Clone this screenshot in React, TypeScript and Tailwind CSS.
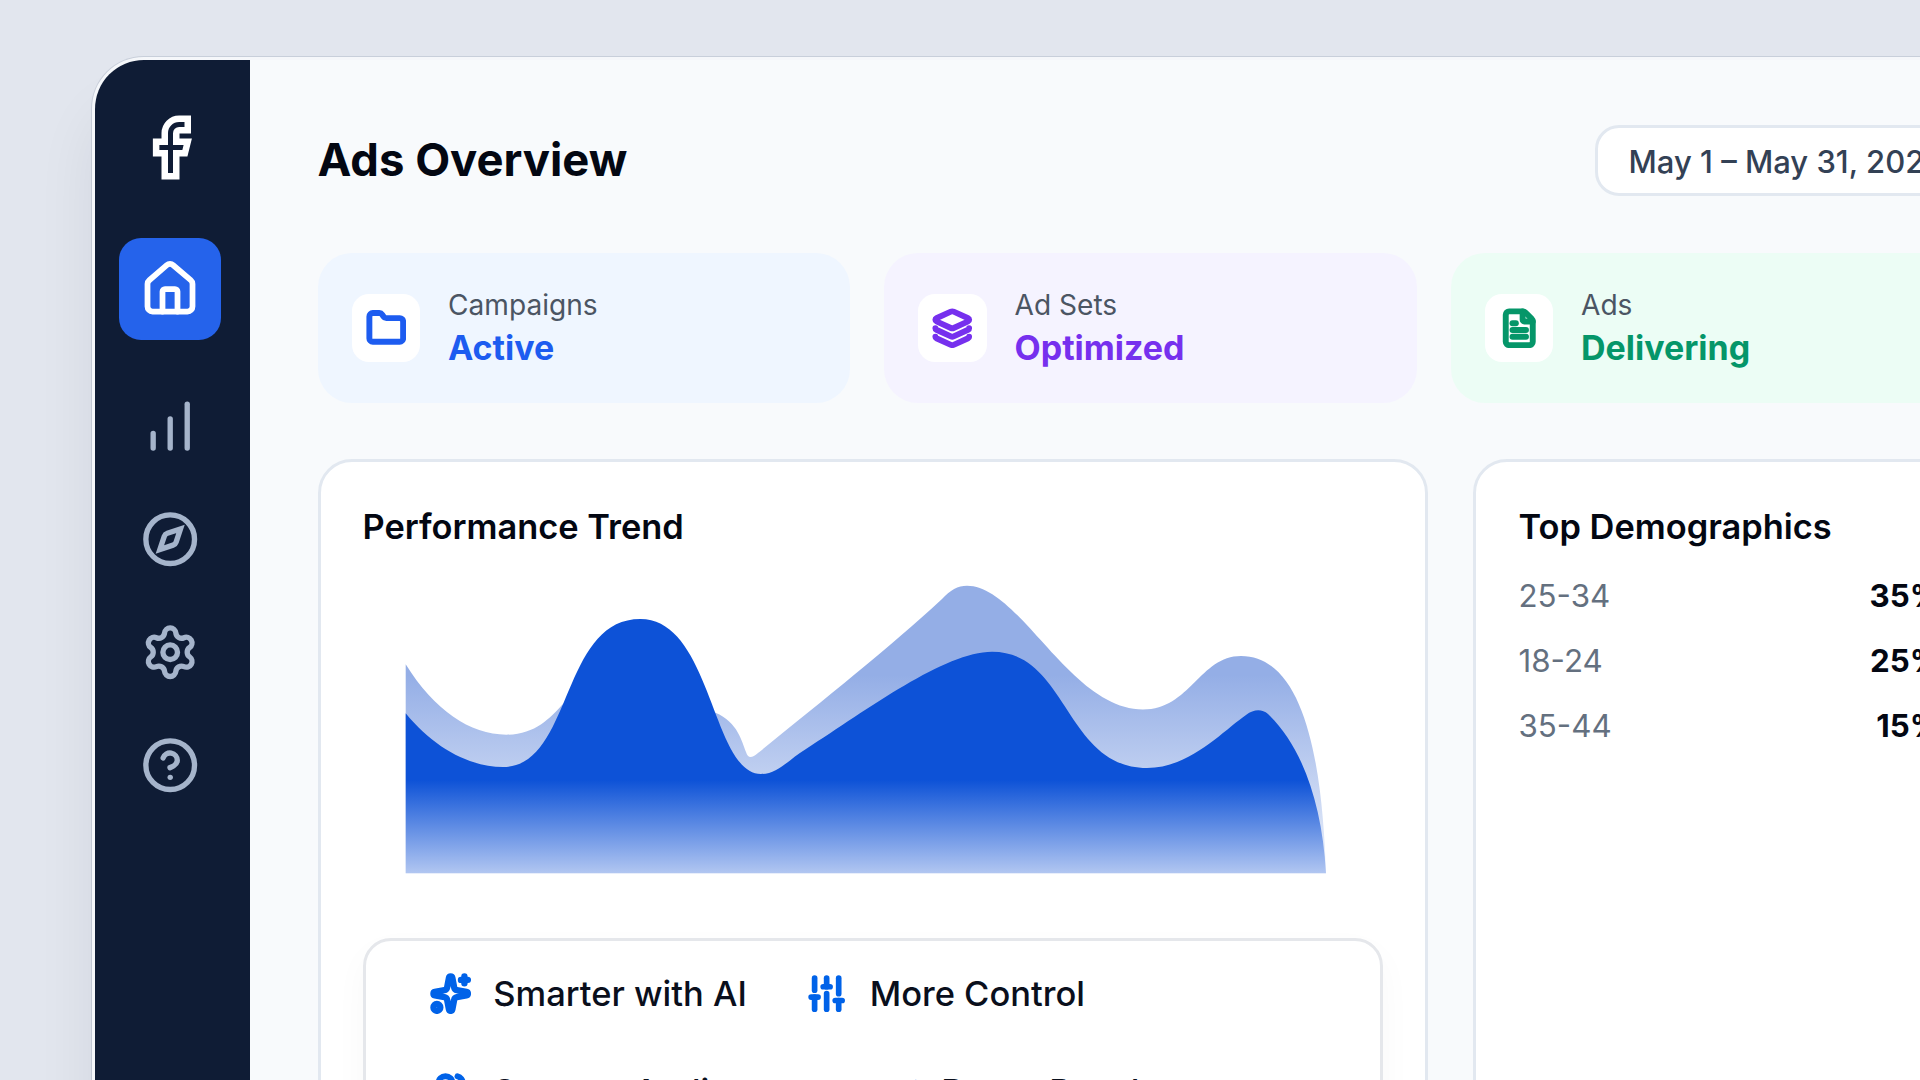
import type { ReactNode } from "react";
import {
  ChartNoAxesColumnIncreasing,
  CircleQuestionMark,
  Compass,
  FileText,
  Folder,
  House,
  Layers,
  Settings,
  SlidersVertical,
  Sparkles,
  TrendingUp,
  Users,
} from "lucide-react";

const navItems = [
  { name: "Reports", icon: ChartNoAxesColumnIncreasing },
  { name: "Explore", icon: Compass },
  { name: "Settings", icon: Settings },
  { name: "Help", icon: CircleQuestionMark },
];

const stats = [
  { label: "Campaigns", value: "Active", icon: Folder, bg: "bg-[#eff6ff]", color: "text-[#1d5cf0]" },
  { label: "Ad Sets", value: "Optimized", icon: Layers, bg: "bg-[#f5f3ff]", color: "text-[#7630ee]" },
  { label: "Ads", value: "Delivering", icon: FileText, bg: "bg-[#ecfdf5]", color: "text-[#059669]" },
];

const demographics = [
  { range: "25-34", share: "35%" },
  { range: "18-24", share: "25%" },
  { range: "35-44", share: "15%" },
];

function FacebookMark() {
  return (
    <svg viewBox="0 0 24 24" className="size-[69px]" fill="none" stroke="currentColor" strokeWidth="2.26">
      <path d="M18 2h-3a5 5 0 0 0-5 5v3H7v4h3v8h4v-8h3l1-4h-4V7a1 1 0 0 1 1-1h3z" />
    </svg>
  );
}

function Sidebar() {
  return (
    <aside className="flex w-[155px] shrink-0 flex-col items-center rounded-tl-[49px] bg-[#0f1c35] pt-[53px] pr-[4px] text-white">
      <FacebookMark />
      <div className="mt-[55.5px] flex size-[102.5px] items-center justify-center rounded-[22px] bg-[#2563eb]">
        <House className="size-[60px]" strokeWidth={2.3} />
      </div>
      <nav className="mt-[56.5px] flex flex-col gap-[54.8px] text-[#a5b4cb]">
        {navItems.map(({ name, icon: Icon }) => (
          <Icon key={name} className="size-[58.4px]" strokeWidth={2.2} strokeLinejoin="miter" />
        ))}
      </nav>
    </aside>
  );
}

// Two overlapping areas, the lighter one sits behind
function TrendChart() {
  return (
    <svg viewBox="405 580 922 294" className="ml-[42px] mt-[29px] h-[294px] w-[922px]">
      <defs>
        <linearGradient id="reach" gradientUnits="userSpaceOnUse" x1="0" y1="675" x2="0" y2="873">
          <stop offset="0" stopColor="#94aee6" />
          <stop offset="1" stopColor="#ecf1fb" />
        </linearGradient>
        <linearGradient id="clicks" gradientUnits="userSpaceOnUse" x1="0" y1="780" x2="0" y2="873">
          <stop offset="0" stopColor="#0d52d7" />
          <stop offset="1" stopColor="#b1c6f1" />
        </linearGradient>
      </defs>
      <path
        fill="url(#reach)"
        d="M405.7 664.3C434 710 470 734.7 506.4 734.7C535 734.7 550 718 562 705C590 680 680 680 715.4 712.7C738 722 742 742 746 752C748 759 752 758 758 753C820 703 890 647 942 599C950 590 958 585.7 967 585.7C1020 585.7 1070 709.5 1143 709.5C1190 709.5 1200 656 1241 656C1310 656 1323 783 1326 873.3H405.7Z"
      />
      <path
        fill="url(#clicks)"
        d="M405.7 713.3C434 748 470 767 503 767C573 767 560 619 640.4 619C712 619 712 774 761 774C778 774 788 760 806 749C868 709 945 651.7 992 651.7C1068 651.7 1065 768 1147 768C1190 768 1224 730 1246 715C1254 709 1262 709 1268 714C1300 744 1322 800 1326 873.3H405.7Z"
      />
    </svg>
  );
}

function Feature({ icon, children }: { icon: ReactNode; children: ReactNode }) {
  return (
    <div className="flex items-center gap-[22px]">
      <span className="text-[#0062e8]">{icon}</span>
      <span className="text-[34.5px] leading-[52px] font-medium whitespace-nowrap text-[#0a0f1c]">{children}</span>
    </div>
  );
}

function FeatureCard() {
  return (
    <div className="mt-[64.5px] w-[1020px] rounded-[28px] border-[3px] border-[#e5e7eb] bg-white px-[64.5px] pt-[26.5px] pb-[40px] shadow-[0_14px_34px_rgba(15,23,42,0.03)]">
      <div className="flex gap-[59.5px]">
        <Feature icon={<Sparkles className="size-[41.3px]" strokeWidth={3.7} />}>Smarter with AI</Feature>
        <Feature icon={<SlidersVertical className="size-[41.3px]" strokeWidth={3.3} />}>More Control</Feature>
      </div>
      <div className="mt-[46.2px] flex gap-[69px]">
        <Feature icon={<Users className="size-[41.3px]" strokeWidth={3.5} />}>Smarter Audiences</Feature>
        <Feature icon={<TrendingUp className="size-[41.3px]" strokeWidth={3.5} />}>Better Results</Feature>
      </div>
    </div>
  );
}

export default function App() {
  return (
    <div className="h-[1080px] w-[1920px] overflow-hidden bg-[#e2e6ee] pt-[57px] pl-[91.5px] font-[Inter,sans-serif]">
      <div className="flex h-[1200px] w-[2300px] rounded-tl-[52px] border-[3px] border-[#f5f7fa] bg-[#f8fafc] shadow-[0_0_0_1px_rgba(100,116,139,0.2),0_50px_60px_rgba(15,23,42,0.07)]">
        <Sidebar />
        <main className="w-[2060px] pl-[68px]">
          <header className="flex h-[200px] pt-[65px]">
            <h1 className="w-[1277px] pt-[7px] text-[45.4px] leading-[56px] font-bold text-[#030712]">Ads Overview</h1>
            <div className="h-[71px] rounded-[24px] border-[3px] border-[#e2e8f0] bg-white px-[31px] text-[31px] leading-[68px] font-medium whitespace-nowrap text-[#334155]">
              May 1 – May 31, 2025
            </div>
          </header>
          <section className="-mt-[7px] flex gap-[34px]">
            {stats.map(({ label, value, icon: Icon, bg, color }) => (
              <div key={label} className={`flex h-[150px] w-[532.5px] shrink-0 items-center gap-[28px] rounded-[34px] pl-[34px] ${bg} ${color}`}>
                <div className="flex size-[68.5px] items-center justify-center rounded-[17px] bg-white">
                  <Icon className="size-[40.5px]" strokeWidth={3.5} />
                </div>
                <div className="pb-[4px]">
                  <p className="text-[28.1px] leading-[43px] text-[#4b5563]">{label}</p>
                  <p className="text-[34px] leading-[42px] font-bold">{value}</p>
                </div>
              </div>
            ))}
          </section>
          <section className="mt-[55.5px] flex items-start gap-[45px]">
            <div className="h-[900px] w-[1110px] shrink-0 rounded-[34px] border-[3px] border-[#e2e8f0] bg-white px-[42px] pt-[41px]">
              <h2 className="text-[34.4px] leading-[48px] font-semibold text-[#030712]">Performance Trend</h2>
              <TrendChart />
              <FeatureCard />
            </div>
            <div className="h-[900px] w-[515px] shrink-0 rounded-[34px] border-[3px] border-[#e2e8f0] bg-white px-[43px] pt-[41px]">
              <h2 className="text-[34.4px] leading-[48px] font-semibold text-[#030712]">Top Demographics</h2>
              <ul className="mt-[23px] flex flex-col gap-[21px] text-[31.3px] leading-[44px]">
                {demographics.map((row) => (
                  <li key={row.range} className="flex justify-between">
                    <span className="text-[#64707f]">{row.range}</span>
                    <span className="font-bold text-[#030712]">{row.share}</span>
                  </li>
                ))}
              </ul>
            </div>
          </section>
        </main>
      </div>
    </div>
  );
}
